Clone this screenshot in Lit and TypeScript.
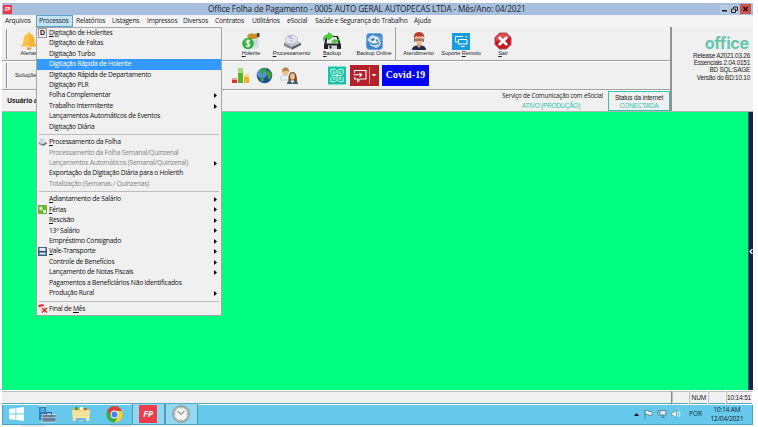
import { LitElement, html, css, svg, nothing, TemplateResult } from "lit";
import { customElement, property } from "lit/decorators.js";
import { classMap } from "lit/directives/class-map.js";

const icon = (w: number, h: number, body: TemplateResult, vb = `0 0 ${w} ${h}`) =>
  html`<svg width=${w} height=${h} viewBox=${vb}>${body}</svg>`;

/** Text with one underlined accelerator letter, marked by a preceding "&". */
const accel = (text: string) => {
  const i = text.indexOf("&");
  return i < 0 ? html`${text}` : html`${text.slice(0, i)}<u>${text[i + 1]}</u>${text.slice(i + 2)}`;
};

const holerite = icon(18, 18, svg`
  <path d="M6 3h10v13H7z" fill="#dfe5ef" stroke="#b9c2d0" stroke-width=".5"/>
  <path d="M10 9h5M10 11h5M10 13h5" stroke="#a9b4c6" stroke-width=".7"/>
  <path d="M5 4q3-4 7-2l4-1v5l-4 1-5 0z" fill="#c98d2b"/><path d="M15 1h2.500v4h-2.500z" fill="#4c463b"/>
  <circle cx="6" cy="11.500" r="5.700" fill="#22ad2b"/><circle cx="5.500" cy="10" r="3.800" fill="#4fc94d" opacity=".6"/>
  <path d="M8 9.500Q7.500 8.600 6 8.600T4.300 10Q4.300 11.200 6 11.500T7.900 13T6 14.500T4 13.500M6 7.600v8" fill="none" stroke="#fff" stroke-width="1.100"/>`);

const drive = (w: number, h: number) => icon(w, h, svg`
  <path d="M1 10l9-4 8 4v2l-9 4.500L1 13z" fill="#85878f"/><path d="M1 10l9-4 8 4-9 4z" fill="#c9cad0"/>
  <path d="M9 14l9-4v2l-9 4.500z" fill="#5b5c63"/>
  <ellipse cx="8.500" cy="6.500" rx="6" ry="4.500" fill="#e4e5f3" stroke="#a5a6bd" stroke-width=".6"/>
  <path d="M8.500 6.500L4 3.500Q6 2 9 2z" fill="#b9bce6"/><ellipse cx="8.500" cy="6.500" rx="1.600" ry="1.300" fill="#fff" stroke="#9293aa" stroke-width=".6"/>`, "0 0 18 17");

const backup = icon(18, 18, svg`
  <path d="M3 4h12l3 9v4H1v-4z" fill="#202225"/><path d="M4.500 5h9l2 6.500h-12z" fill="#e7eaed"/>
  <path d="M5 13.500h9v3.500H5z" fill="#d5d9dd"/><path d="M6.500 14h2v2.500h-2z" fill="#222"/>
  <path d="M0 9Q0 2.500 5.500 2.500V.5l5 3.700-5 3.800V5.500Q2.500 5.500 0 9z" fill="#4fd038" stroke="#239b20" stroke-width=".5"/>
  <path d="M16 6.500q0 4-4 4v1.500L8.500 9.500 12 7v1.500q2 0 4-2z" fill="#51cf38" stroke="#239b20" stroke-width=".4"/>`);

const online = icon(17, 17, svg`
  <rect x=".5" y=".5" width="16" height="16" rx="3" fill="#3b83cf" stroke="#76a8da"/>
  <path d="M1 4q7-4 15 0v4H1z" fill="#72ace2" opacity=".7"/>
  <circle cx="8.500" cy="8.500" r="5.200" fill="#e3f1fb"/>
  <path d="M5 6l3-1 1 1.500-2 1.500-2-.5zM10.500 6l1.800 1-.8 2-1.500-.8z" fill="#3e79b5"/><path d="M4 9.500q4.500 4 9 0" fill="none" stroke="#3e79b5" stroke-width="1.200"/>
  <path d="M2.500 8Q3 3 8 2.500M14.500 9Q14 14 9 14.500" stroke="#fff" fill="none" stroke-width="1"/>`);

const agent = icon(16, 18, svg`
  <path d="M1 18q0-4 4.500-4.500h5q4.500 .5 4.500 4.500z" fill="#1d2c4d"/><path d="M6 11h4v3l-2 2-2-2z" fill="#d79a76"/>
  <ellipse cx="8" cy="7.500" rx="4" ry="5" fill="#efb892"/><path d="M3 7Q2 0 8 0t5.200 7l-1.200-3q-4 1-7 0z" fill="#b2402a"/>
  <path d="M4.500 7h3v1.400h-3zM8.500 7h3v1.400h-3z" fill="none" stroke="#573429" stroke-width=".6"/><path d="M3.500 7v3M12.500 7v3" stroke="#8a4634" stroke-width=".8"/>`);

const remote = icon(18, 17, svg`
  <path d="M0 0h18v17H0z" fill="#169fe0"/>
  <path d="M7 9H3.500V3.500h7.500M13 3.500h1.500M6.500 6.500h8.500v4.500h-8.500zM9 13.500h4M14.500 3.500v1" fill="none" stroke="#fff" stroke-width="1"/>`);

const exit = icon(18, 18, svg`
  <path d="M5.500.7h7l4.800 4.800v7l-4.800 4.800h-7L.7 12.500v-7z" fill="#cb1420" stroke="#a9a9a9" stroke-width=".9"/>
  <path d="M5.700 1.500h6.600L16 5.500q-6 4-14 3V5.500z" fill="#e5646b" opacity=".7"/>
  <path d="M5.700 5.700l6.600 6.600M12.300 5.700l-6.600 6.600" stroke="#fff" stroke-width="2.800" stroke-linecap="round"/>`);

const bell = icon(18, 18, svg`
  <path d="M9 0q1.500 0 1.500 2 4 1 4 6 0 4 3 6.500H.500Q3.500 12 3.500 8q0-5 4-6Q7.500 0 9 0z" fill="#fbc04a"/>
  <path d="M9 2q5 1 5 6 0 4 3 6.500H9z" fill="#f7b236"/><path d="M6.500 15.500h5Q11 18 9 18t-2.500-2.500z" fill="#e8973a"/>`);

const chart = icon(17, 17, svg`
  <path d="M0 11h5v5H0z" fill="#dc3038"/><path d="M0 11h5v2H0z" fill="#f09a9a"/>
  <path d="M6 1h5v15H6z" fill="#58b424"/><path d="M6 1h5v5H6z" fill="#a5d97f"/>
  <path d="M12 7h5v9h-5z" fill="#f3ad27"/><path d="M12 7h5v3h-5z" fill="#fbdc94"/>`);

const globe = icon(17, 17, svg`
  <circle cx="8.500" cy="8.500" r="7.800" fill="#1b4ba0"/><circle cx="6" cy="6.500" r="5" fill="#6db0f0" opacity=".7"/>
  <path d="M5 1.500q3-1.200 6 0l-1 2.500-2 1-2 2-2-1zM10.500 4.500l3-1 2.500 4-2 5-2-1-.5-3-2-1zM4 10l3 .5L8 13l-1.500 2.500Q4 14 4 10z" fill="#3da336"/>`);

const people = icon(18, 17, svg`
  <path d="M0 13q0-4.500 5-4.500t5 4.500z" fill="#eef3f7" stroke="#9db0c0" stroke-width=".5"/><circle cx="5.500" cy="5" r="3.200" fill="#f0bd91"/>
  <path d="M2 5Q2 0 6 .5 9.500 1 9 5 7 2.500 2 5z" fill="#b98546"/>
  <path d="M7 17q0-4 5.500-4t5.500 4z" fill="#3f5d74"/><path d="M8.500 14Q8 5 12.500 5T17 14h-2.500L12 13z" fill="#75471f"/>
  <ellipse cx="12.500" cy="9.500" rx="2.400" ry="3.200" fill="#f2c39a"/><path d="M10.500 13.500h4l-2 3z" fill="#fff"/>`);

const clover = icon(18, 19, svg`
  <path d="M0 0h19v19H0z" fill="#1bc1a7"/>
  <g fill="none" stroke="#e4fffb" stroke-width=".9"><path d="M3 3h4.500l2 2 2-2H16v4.500l-2 2 2 2V16h-4.500l-2-2-2 2H3v-4.500l2-2-2-2z"/>
  <path d="M9.500 5v9M5 9.500h9"/><path d="M5.500 5.500h2v2h-2zM11.500 5.500h2v2h-2zM5.500 11.500h2v2h-2zM11.500 11.500h2v2h-2z" stroke-width=".7"/></g>`, "0 0 19 19");

const chat = icon(29, 21, svg`
  <path d="M0 0h29v21H0z" fill="#b5202c"/>
  <path d="M4.500 8V5.500h11.500v8.500H10l-2 2.500v-2.500H4.500V12M3.500 9.800h8M9.500 7.800l2.200 2-2.200 2" fill="none" stroke="#fff" stroke-width="1.100"/>
  <path d="M19.500 2v17" stroke="#e8a2a8" stroke-width=".9"/><path d="M21.500 9h5l-2.500 2.600z" fill="#fff"/>`);

const windows = icon(15, 14, svg`<path d="M0 2l6.500-1v5.600H0zM7.300.9L15 0v6.600H7.300zM0 7.400h6.500V13L0 12zM7.300 7.400H15V14l-7.700-1z" fill="#fff"/>`);
const server = icon(18, 18, svg`
  <path d="M1 0h7v15H1z" fill="#2a82bd"/><path d="M1 0h7v2H1z" fill="#a3d5f0"/><path d="M2.500 4h4M2.500 6h4" stroke="#a7def7" stroke-width=".8"/>
  <path d="M4 9.500h14v7.500H4z" fill="#668197" stroke="#dceaf2" stroke-width=".7"/><path d="M8.500 9.500V7.500h5v2" fill="none" stroke="#3d5264"/><path d="M4 12.500h14" stroke="#b4c9d6" stroke-width=".7"/>`);
const folder = icon(18, 17, svg`
  <path d="M1 2h6l1 1h9v12H1z" fill="#e3bd59"/><path d="M3 1h3v3H3z" fill="#3f9e55"/><path d="M8 1h3v3H8z" fill="#f7f2d7"/><path d="M12 2h3v2h-3z" fill="#d6582e"/>
  <path d="M0 4.500h18l-1 10.500H1z" fill="#f9e69f"/><path d="M1 7h16M1.500 9.500h15" stroke="#efd585" stroke-width=".6"/>
  <path d="M3.500 16.500v-3q0-1.500 1.500-1.500h8q1.500 0 1.500 1.500v3h-3v-2h-5v2z" fill="#70b8e2"/>`);
const chrome = icon(17, 17, svg`
  <circle cx="8.500" cy="8.500" r="8.200" fill="#3cad4b"/>
  <path d="M8.500 8.500L12.200 10.600 8.500 16.700A8.200 8.200 0 0 0 15.900 4.800H8.500z" fill="#fbcf3a"/>
  <path d="M1.400 4.400A8.200 8.200 0 0 1 15.900 4.900H8.500L5 10.500z" fill="#dd4437"/>
  <circle cx="8.500" cy="8.500" r="3.900" fill="#fff"/><circle cx="8.500" cy="8.500" r="3" fill="#4384f0"/>`);
const clock = icon(18, 18, svg`
  <circle cx="9" cy="9" r="8.400" fill="#aeb5b8" stroke="#7e868a" stroke-width=".6"/><circle cx="9" cy="9" r="6.800" fill="#f5f5f1" stroke="#9ca3a7" stroke-width=".6"/>
  <path d="M5.500 6L9 9.500 12.500 6" stroke="#444" fill="none" stroke-width=".9"/><path d="M9 3v1M9 14v1M3 9h1M14 9h1" stroke="#888" stroke-width=".7"/>`);

const menuIcons: Record<string, TemplateResult> = {
  d: html`<b class="dbox">D</b>`,
  drive: drive(9, 8),
  ferias: icon(9, 9, svg`<rect width="9" height="9" rx="1" fill="#69b52e"/><path d="M1 2.500l3-1 1 3-3 1zM5 5h3v3H5z" fill="#d9efbd"/><circle cx="6.500" cy="6.500" r="1.200" fill="#fff"/>`),
  vale: icon(9, 9, svg`<path d="M0 0h9v9H0z" fill="#3c5f8c"/><path d="M1.500 1h6v3h-6zM1.500 5.500h6v2h-6z" fill="#dfe9f3"/><path d="M0 4.700h9" stroke="#1c3558" stroke-width=".6"/>`),
  final: icon(10, 9, svg`<path d="M0 2l6-1 2 5-5 1z" fill="#f5e8e3" stroke="#c99" stroke-width=".4"/><path d="M0 1l5-1 1 2-5 1z" fill="#d23628"/><path d="M4 4l5 4.500M9 4L4 8.500" stroke="#e12a25" stroke-width="1.500"/>`),
};

interface Entry { t: string; sub?: boolean; off?: boolean; sel?: boolean; i?: string }
const groups: Entry[][] = [
  [
    { t: "&Digitação de Holerites", i: "d" }, { t: "Digitação de Faltas" }, { t: "Digitação Turbo" },
    { t: "Digitação Rápida de Holerite", sel: true }, { t: "Digitação Rápida de Departamento" }, { t: "Digitação PLR" },
    { t: "Folha Complementar", sub: true }, { t: "Trabalho Intermitente", sub: true },
    { t: "Lançamentos Automáticos de Eventos" }, { t: "Digitação Diária" },
  ],
  [
    { t: "&Processamento da Folha", i: "drive" }, { t: "Processamento da Folha Semanal/Quinzenal", off: true },
    { t: "Lançamentos Automáticos (Semanal/Quinzenal)", off: true, sub: true },
    { t: "Exportação da Digitação Diária para o Holerith" }, { t: "Totalização (Semanas / Quinzenas)", off: true },
  ],
  [
    { t: "&Adiantamento de Salário", sub: true }, { t: "&Férias", sub: true, i: "ferias" }, { t: "&Rescisão", sub: true },
    { t: "13º Salário", sub: true }, { t: "Empréstimo Consignado", sub: true }, { t: "&Vale-Transporte", sub: true, i: "vale" },
    { t: "Controle de Benefícios", sub: true }, { t: "Lançamento de Notas Fiscais", sub: true },
    { t: "Pagamentos a Beneficiários Não Identificados" }, { t: "Produção Rural", sub: true },
  ],
  [{ t: "Final de &Mês", i: "final" }],
];

@customElement("drop-menu")
export class DropMenu extends LitElement {
  @property({ attribute: false }) groups: Entry[][] = [];
  static styles = css`
    :host { display: block; box-sizing: border-box; width: 186px; height: 289px; background: #f0f0f0; border: 1px solid #a5a5a5; font: 6.750px/10.400px "Open Sans", "Noto Sans", sans-serif; letter-spacing: -0.250px; color: #101010; }
    .row { height: 10.410px; display: grid; grid-template-columns: 12px 1fr 7px; align-items: center; white-space: nowrap; }
    .sel { background: #3399ff; color: #fff; }
    .off { color: #858585; letter-spacing: -.27px; }
    .ic { display: flex; align-items: center; padding-left: 1px; height: 10px; }
    .sep { height: 5.150px; display: flex; align-items: center; }
    .sep::before { content: ""; flex: 1; margin: 0 2px; border-top: 1px solid #bdbdbd; }
    .dbox { display: block; width: 7px; height: 8px; font: bold 7px/8px "Liberation Sans", sans-serif; text-align: center; border: 1px solid #999; box-sizing: content-box; }
    u { text-underline-offset: 1px; text-decoration-thickness: .7px; }
  `;
  render() {
    return this.groups.map((g, n) => html`
      ${n ? html`<div class="sep"></div>` : nothing}
      ${g.map(e => html`<div class=${classMap({ row: true, sel: !!e.sel, off: !!e.off })}>
        <span class="ic">${e.i ? menuIcons[e.i] : nothing}</span><span>${accel(e.t)}</span>
        ${e.sub ? icon(3, 5, svg`<path d="M0 0l3 2.500L0 5z" fill="#000"/>`) : nothing}
      </div>`)}`);
  }
}

@customElement("app-root")
export class AppRoot extends LitElement {
  static styles = css`
    :host { display: block; width: 758px; height: 427px; background: #fff; overflow: hidden; font-family: "Open Sans", "Noto Sans", sans-serif; color: #1c1c1c; }
    * { box-sizing: border-box; }
    svg { display: block; flex: none; }
    u { text-underline-offset: 1px; text-decoration-thickness: .7px; }
    .screen { margin-left: 2px; width: 751px; padding-top: 3px; }
    .title { height: 12px; background: #a5bfdc; display: grid; grid-template-columns: 13px 1fr 33px; align-items: center; }
    .fp { background: #ed3b4a; color: #fff; font: italic bold 5px/9px "Open Sans", sans-serif; width: 9px; height: 9px; margin-left: 1px; text-align: center; }
    .caption { font-size: 8.200px; line-height: 12px; padding-left: 193px; white-space: nowrap; letter-spacing: -.115px; color: #20242b; }
    .win { display: flex; align-items: center; gap: 1px; }
    .menubar { position: relative; height: 12px; background: #f4f4f4; display: grid; grid-template-columns: 34px 37px 36px 35px 36px 32px 37px 35px 28px 99px 40px; font-size: 6.750px; line-height: 12px; letter-spacing: -.24px; white-space: nowrap; }
    .mi { padding-left: 3px; }
    .open { background: #c2e3f5; outline: 1px solid #5fa3cc; outline-offset: -1px; }
    drop-menu { position: absolute; left: 34px; top: 12px; z-index: 2; }
    .tools { height: 85px; background: #f0f0f0; display: grid; grid-template-columns: 670px 1fr; border-bottom: 1px solid #b4b4b4; }
    .bars { display: grid; grid-template-rows: 34px 29px 1fr; border-right: 2px solid #929292; }
    .bar { border-bottom: 1px solid #9e9e9e; box-shadow: 0 1px #fff; display: flex; min-width: 0; }
    .grip { width: 2px; margin: 2px 0 1px 4px; background: #8b8b8b; border-right: 1px solid #fff; flex: none; }
    .tool { display: flex; flex-direction: column; align-items: center; padding-top: 5px; font: 5.500px/6px "Liberation Sans", sans-serif; letter-spacing: -.05px; white-space: nowrap; }
    .pic { display: flex; height: 18px; align-items: center; }
    .row1 { display: grid; grid-template-columns: 6px 42px 180px 42px 39px 42px 42px 2px 43px 42px 42px; }
    .vline { background: #a0a0a0; width: 1px; }
    .row2 { align-items: center; font: 6px/8px "Liberation Sans", sans-serif; }
    .row2 .grip { align-self: stretch; }
    .sol { width: 205px; padding-left: 7px; }
    .field { width: 9px; height: 13px; border: 1px solid #aab8cf; background: #fff; }
    .quick { display: flex; gap: 7px; margin-left: 10px; align-items: center; }
    .box { display: flex; align-items: center; gap: 4px; margin-left: 30px; }
    .covid { width: 47px; height: 21px; margin-left: -1px; background: #0202f5; color: #fff; font: bold 9.800px/20px "Liberation Serif", serif; text-align: center; letter-spacing: .2px; }
    .row3 { display: grid; grid-template-columns: 1fr 130px 62px; align-items: center; white-space: nowrap; }
    .user { font-size: 6.800px; font-weight: 700; padding-left: 5px; letter-spacing: -.18px; }
    .status { text-align: center; font: 6.500px/8px "Liberation Sans", sans-serif; }
    .soc { font: 6.300px/8.500px "Open Sans", sans-serif; letter-spacing: -.2px; text-align: right; padding: 1px 5px 0 0; }
    .soc .teal { display: block; padding-right: 23px; font: 6.500px/9px "Liberation Sans", sans-serif; letter-spacing: -.3px; }
    .teal { color: #30c5b0; display: block; }
    .net { border: 1px solid #35c3ae; height: 20px; padding-top: 2px; letter-spacing: -.15px; }
    .brand { text-align: right; padding: 6.500px 3px 0 0; font: 6.400px/7.400px "Liberation Sans", sans-serif; letter-spacing: -.22px; white-space: nowrap; }
    .logo { font: bold 16.200px/19px Inter, sans-serif; color: #66c6ad; letter-spacing: -.25px; height: 18px; padding-right: 1px; }
    .desk { height: 278px; display: grid; grid-template-columns: 1fr 5px; background: #00ff80; }
    .side { background: #19205a; border-left: 1px solid #4c5865; display: flex; align-items: center; }
    .foot { height: 13px; background: #f0f0f0; display: grid; grid-template-columns: 670px 17px 19px 18px 1fr; font: 6.600px/12px "Liberation Sans", sans-serif; border-top: 1px solid #fff; }
    .cell { border: 1px solid #bdbdbd; border-right-color: #fff; border-bottom-color: #fff; text-align: right; white-space: nowrap; letter-spacing: -.2px; padding-right: 1px; }
    .cell:first-child { border-left: 0; border-right: 1px solid #888; }
    .task { height: 22px; width: 751px; background: #66c9eb; border: 1px solid #4ca1c6; border-top-color: #58a7c3; display: grid; grid-template-columns: 26.500px 34px 34px 34px 33px 33px 1fr auto; align-items: center; }
    .task > div { height: 20px; display: flex; align-items: center; justify-content: center; }
    .on { background: #91d8f0; border-left: 1px solid #4e98b7; border-right: 1px solid #4e98b7; }
    .big { width: 18px; height: 18px; background: #ee3d4c; color: #fff; font: italic bold 8.500px/18px "Open Sans", sans-serif; text-align: center; }
    .tray { gap: 4px; font-size: 6.500px; line-height: 9.500px; color: #14242c; letter-spacing: -.15px; }
    .lang { margin-left: 4px; letter-spacing: 0; }
    .time { text-align: center; width: 46px; padding-right: 4px; }
    .shade { display: grid; grid-template-columns: 18px 26px 64px 22px; height: 2px; }
    .shade i:nth-child(even) { background: #e8e8e8; border-radius: 0 0 3px 3px; }
  `;

  tool(i: TemplateResult, label: string) {
    return html`<div class="tool"><div class="pic">${i}</div><div>${accel(label)}</div></div>`;
  }

  render() {
    const menus = ["Arquivos", "Processos", "Relatórios", "Listagens", "Impressos", "Diversos", "Contratos", "Utilitários", "eSocial", "Saúde e Segurança do Trabalho", "Ajuda"];
    return html`<div class="screen">
      <div class="title">
        <div class="fp">FP</div>
        <div class="caption">Office Folha de Pagamento - 0005 AUTO GERAL AUTOPECAS LTDA - Mês/Ano: 04/2021</div>
        <div class="win">
          ${icon(9, 9, svg`<path d="M0 0h9v9H0z" fill="#b8cbe0"/><path d="M2 5h5v1.600H2z" fill="#222"/>`)}
          ${icon(9, 9, svg`<path d="M0 0h9v9H0z" fill="#b8cbe0"/><path d="M3.500 3.500V2h4v3.500H6M1.500 4h4v3.500h-4z" fill="none" stroke="#222" stroke-width="1"/>`)}
          ${icon(11, 10, svg`<path d="M0 0h11v10H0z" fill="#c9544b"/><path d="M3.500 3l4 4M7.500 3l-4 4" stroke="#25100e" stroke-width="1.400"/>`)}
        </div>
      </div>
      <div class="menubar">
        ${menus.map((m, n) => html`<div class=${classMap({ mi: true, open: n === 1 })}>${m}</div>`)}
        <drop-menu .groups=${groups}></drop-menu>
      </div>
      <div class="tools">
        <div class="bars">
          <div class="bar row1">
            <div class="grip"></div>${this.tool(bell, "Alertas")}<div></div>
            ${this.tool(holerite, "&Holerite")}${this.tool(drive(18, 17), "&Processamento")}${this.tool(backup, "&Backup")}${this.tool(online, "Backup Online")}
            <div class="vline"></div>
            ${this.tool(agent, "Atendimento")}${this.tool(remote, "Suporte &Remoto")}${this.tool(exit, "&Sair")}
          </div>
          <div class="bar row2">
            <div class="grip"></div><div class="sol">Soluções</div><div class="field"></div>
            <div class="quick">${chart}${globe}${people}</div>
            <div class="box">${clover}${chat}<div class="covid">Covid-19</div></div>
          </div>
          <div class="row3">
            <div class="user">Usuário ativo</div>
            <div class="soc">Serviço de Comunicação com eSocial<span class="teal">ATIVO (PRODUÇÃO)</span></div>
            <div class="status net">Status da internet<span class="teal">CONECTADA</span></div>
          </div>
        </div>
        <div class="brand"><div class="logo">office</div>Release A2021.03.26<br>Essenciais 2.04.0151<br>BD SQL:SAGE<br>Versão do BD:10.10</div>
      </div>
      <div class="desk"><div></div><div class="side">${icon(4, 5, svg`<path d="M3.500 0L.8 2.500 3.500 5" fill="none" stroke="#fff" stroke-width="1.200"/>`)}</div></div>
      <div class="foot"><div class="cell"></div><div class="cell"></div><div class="cell">NUM</div><div class="cell"></div><div class="cell">10:14:51</div></div>
      <div class="task">
        <div>${windows}</div><div>${server}</div><div>${folder}</div><div>${chrome}</div>
        <div class="on"><span class="big">FP</span></div><div class="on">${clock}</div><div></div>
        <div class="tray">
          ${icon(5, 3, svg`<path d="M0 3h5L2.500 0z" fill="#111"/>`)}
          ${icon(10, 10, svg`<path d="M2 1v9M2 1.500h3.500v1H9v4H5.500v-1H2z" fill="#d9f0f8" stroke="#5e7680" stroke-width=".7"/>`)}
          ${icon(10, 10, svg`<path d="M3 1.500h6v4.500H3zM1 1v4q0 2 2 2M4.500 8.500h3.500M6 6v2.500" fill="#d9f0f8" stroke="#52717e" stroke-width=".8"/>`)}
          ${icon(10, 10, svg`<path d="M1 3.500h2L5 1v8L3 6.500H1z" fill="#fff" stroke="#5e7680" stroke-width=".5"/><path d="M6.300 3q1.500 2 0 4M8 2q2.200 3 0 6" fill="none" stroke="#eefaff" stroke-width=".8"/>`)}
          <span class="lang">POR</span><div class="time">10:14 AM<br>12/04/2021</div>
        </div>
      </div>
      <div class="shade"><i></i><i></i><i></i><i></i></div>
    </div>`;
  }
}
